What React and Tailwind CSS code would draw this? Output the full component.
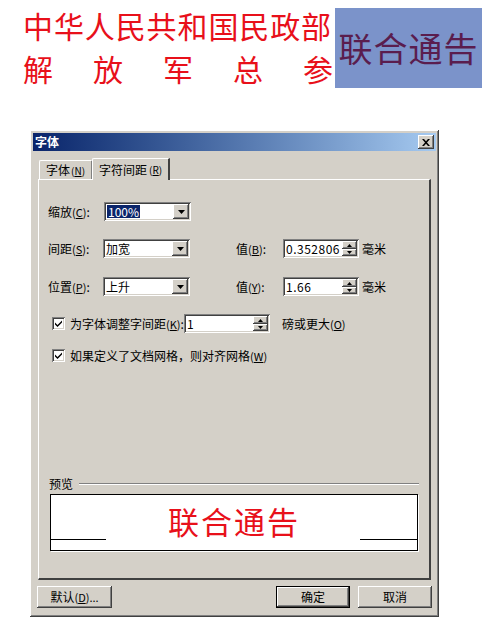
import React from "react";

const raised = "shadow-[inset_-1px_-1px_#404040,inset_1px_1px_#ffffff,inset_-2px_-2px_#808080,inset_2px_2px_#d4d0c8]";
const sunken = "shadow-[inset_1px_1px_#808080,inset_-1px_-1px_#ffffff,inset_2px_2px_#404040,inset_-2px_-2px_#d4d0c8]";

function DownBtn() {
  return (
    <div className={`w-[16px] h-[15px] bg-[#d4d0c8] ${raised} flex items-center justify-center`}>
      <svg width="7" height="4" viewBox="0 0 7 4"><path d="M0 0h7L3.5 4z" fill="#000" /></svg>
    </div>
  );
}

function Combo({ value, selected }) {
  return (
    <div className={`w-[87px] h-[19px] bg-white ${sunken} flex items-center justify-between pl-[3px] pr-[2px]`}>
      {selected ? (
        <span className="bg-[#0a246a] text-white leading-[13px] px-[1px]">{value}</span>
      ) : (
        <span className="leading-[13px]">{value}</span>
      )}
      <DownBtn />
    </div>
  );
}

function Spin({ value, w = "w-[76px]" }) {
  return (
    <div className={`${w} h-[19px] bg-white ${sunken} flex items-center justify-between pl-[3px] pr-[2px]`}>
      <span className="leading-[13px] tracking-[0.5px]">{value}</span>
      <div className="flex flex-col">
        <div className={`w-[15px] h-[8px] bg-[#d4d0c8] ${raised} flex items-center justify-center`}>
          <svg width="5" height="3" viewBox="0 0 5 3"><path d="M2.5 0L5 3H0z" fill="#000" /></svg>
        </div>
        <div className={`w-[15px] h-[7px] bg-[#d4d0c8] ${raised} flex items-center justify-center`}>
          <svg width="5" height="3" viewBox="0 0 5 3"><path d="M0 0h5L2.5 3z" fill="#000" /></svg>
        </div>
      </div>
    </div>
  );
}

function Check() {
  return (
    <div className={`w-[13px] h-[13px] bg-white ${sunken} flex items-center justify-center`}>
      <svg width="7" height="7" viewBox="0 0 7 7"><path d="M0 2.5l2.5 2.5L7 0.5v2L2.5 7 0 4.5z" fill="#000" /></svg>
    </div>
  );
}

function Btn({ children, w, def }) {
  return (
    <div className={`${w} h-[22px] bg-[#d4d0c8] ${def ? "shadow-[inset_1px_1px_#000,inset_-1px_-1px_#000,inset_-2px_-2px_#404040,inset_2px_2px_#ffffff,inset_-3px_-3px_#808080]" : raised} flex items-center justify-center`}>
      {children}
    </div>
  );
}

export default function App() {
  const cjk = "font-['Noto_Sans_CJK_SC',sans-serif]";
  return (
    <div className={`w-[500px] h-[635px] bg-white ${cjk} relative overflow-hidden`}>
      {/* header */}
      <div className="flex pt-[8px]">
        <div className="w-[335px] pl-[23px] pr-[2px] text-[#e8101a]">
          <div className="text-[30px] leading-[40px] tracking-[0.9px] -mt-[3px] whitespace-nowrap">中华人民共和国民政部</div>
          <div className="flex justify-between text-[30px] leading-[40px] mt-[3px]">
            <span>解</span><span>放</span><span>军</span><span>总</span><span>参</span>
          </div>
        </div>
        <div className="w-[147px] h-[80px] bg-[#7b93ca] flex items-center justify-center">
          <span className="text-[34px] text-[#5a1d4e] tracking-[1px] leading-none">联合通告</span>
        </div>
      </div>

      {/* dialog */}
      <div className={`absolute left-[30px] top-[130px] w-[409px] h-[487px] bg-[#d4d0c8] ${raised} p-[3px] text-[12px] text-black flex flex-col`}>
        <div className="h-[18px] bg-gradient-to-r from-[#0a246a] to-[#a6caf0] flex items-center justify-between pl-[2px] pr-[2px]">
          <span className="text-white font-bold text-[12px] leading-none">字体</span>
          <div className={`w-[16px] h-[14px] bg-[#d4d0c8] ${raised} flex items-center justify-center`}>
            <svg width="8" height="7" viewBox="0 0 8 7"><path d="M0 0h2l2 2.3L6 0h2L5 3.5 8 7H6L4 4.7 2 7H0l3-3.5z" fill="#000" /></svg>
          </div>
        </div>

        {/* tabs */}
        <div className="flex items-end pl-[6px] mt-[6px] h-[22px]">
          <div className="h-[19px] px-[6px] flex items-center border-t border-l border-white border-r-[2px] border-r-[#808080] rounded-tl-[2px]">
            <span>字体</span><span className="text-[10px] ml-[1px]">(<u>N</u>)</span>
          </div>
          <div className="h-[22px] px-[6px] flex items-center border-t border-l border-white border-r-[2px] border-r-[#404040] relative z-10 bg-[#d4d0c8] -mb-[1px] -ml-[1px] rounded-tl-[2px]">
            <span>字符间距</span><span className="text-[10px] ml-[2px]">(<u>R</u>)</span>
          </div>
        </div>

        <div className={`mx-[5px] h-[401px] border-t border-l border-white border-r-[2px] border-b-[2px] border-r-[#404040] border-b-[#404040] flex flex-col`}>
          <div className="pl-[9px] pt-[22px]">
            <div className="flex items-center h-[19px]">
              <span className="w-[56px]">缩放<span className="text-[11px]">(<u>C</u>)</span>:</span>
              <Combo value="100%" selected />
            </div>
            <div className="flex items-center h-[19px] mt-[18px]">
              <span className="w-[55px]">间距<span className="text-[11px]">(<u>S</u>)</span>:</span>
              <Combo value="加宽" />
              <span className="ml-[46px] w-[47px]">值<span className="text-[11px]">(<u>B</u>)</span>:</span>
              <Spin value="0.352806" />
              <span className="ml-[3px]">毫米</span>
            </div>
            <div className="flex items-center h-[19px] mt-[19px]">
              <span className="w-[55px]">位置<span className="text-[11px]">(<u>P</u>)</span>:</span>
              <Combo value="上升" />
              <span className="ml-[46px] w-[47px]">值<span className="text-[11px]">(<u>Y</u>)</span>:</span>
              <Spin value="1.66" />
              <span className="ml-[3px]">毫米</span>
            </div>
            <div className="flex items-center h-[19px] mt-[18px] pl-[4px]">
              <Check />
              <span className="ml-[5px]">为字体调整字间距<span className="text-[11px]">(<u>K</u>)</span>:</span>
              <Spin value="1" w="w-[86px]" />
              <span className="ml-[12px]">磅或更大<span className="text-[11px]">(<u>O</u>)</span></span>
            </div>
            <div className="flex items-center h-[19px] mt-[13px] pl-[4px]">
              <Check />
              <span className="ml-[5px]">如果定义了文档网格，则对齐网格<span className="text-[11px]">(<u>W</u>)</span></span>
            </div>
          </div>

          <div className="mt-auto mb-[27px] px-[10px]">
            <div className="flex items-center h-[14px]">
              <span>预览</span>
              <div className="flex-1 ml-[6px] h-[2px] border-t border-[#808080] border-b border-b-white" />
            </div>
            <div className="mt-[3px] mx-[1px] h-[57px] bg-white border border-black shadow-[1px_1px_#ffffff] flex flex-col">
              <div className="flex-1 flex items-center justify-center pt-[6px]">
                <span className="text-[31px] text-[#e8101a] leading-none tracking-[2px]">联合通告</span>
              </div>
              <div className="flex justify-between mb-[10px]">
                <div className="w-[55px] h-px bg-black" />
                <div className="w-[57px] h-px bg-black" />
              </div>
            </div>
          </div>
        </div>

        {/* buttons */}
        <div className="flex items-center mt-[6px] px-[4px]">
          <Btn w="w-[75px]"><span>默认<span className="text-[11px]">(<u>D</u>)...</span></span></Btn>
          <div className="flex-1" />
          <Btn w="w-[74px]" def>确定</Btn>
          <div className="w-[8px]" />
          <Btn w="w-[74px]">取消</Btn>
        </div>
      </div>
    </div>
  );
}
